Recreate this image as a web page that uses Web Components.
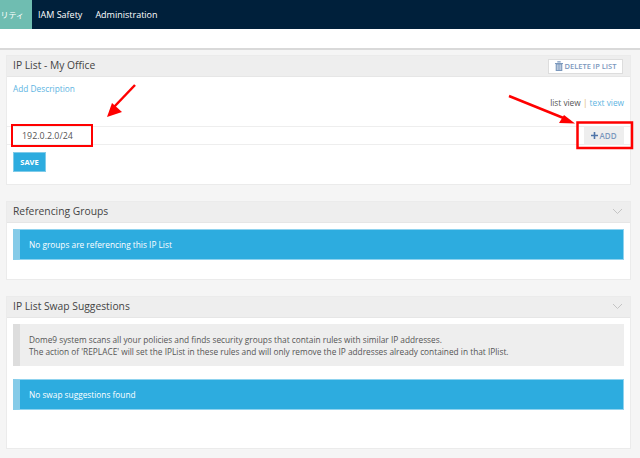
<!DOCTYPE html>
<html>
<head>
<meta charset="utf-8">
<style>
html, body { margin: 0; height: 458px; overflow: hidden; }
body { background: #f5f5f5; font-family: "Open Sans", "Noto Sans CJK JP", sans-serif; color: #444; }
.marks { position: absolute; left: 0; top: 0; }
</style>
</head>
<body>
<top-nav></top-nav>
<page-body>
  <list-panel heading="IP List - My Office" height="130" delete>
    <list-editor></list-editor>
  </list-panel>
  <list-panel heading="Referencing Groups" height="79" chevron>
    <note-box>No groups are referencing this IP List</note-box>
  </list-panel>
  <list-panel heading="IP List Swap Suggestions" height="153" chevron>
    <note-box kind="grey">Dome9 system scans all your policies and finds security groups that contain rules with similar IP addresses.<br>The action of 'REPLACE' will set the IPList in these rules and will only remove the IP addresses already contained in that IPlist.</note-box>
    <note-box style="margin-top:13px">No swap suggestions found</note-box>
  </list-panel>
</page-body>

<!-- red marks drawn on top of the screenshot -->
<svg class="marks" width="640" height="458" fill="none">
  <rect x="12" y="125" width="80" height="21" stroke="#f00" stroke-width="2"/>
  <rect x="577.500" y="122.500" width="54.500" height="25.500" stroke="#f00" stroke-width="2.500"/>
  <path d="M135 85L114 107" stroke="#f00" stroke-width="2.500"/>
  <path d="M107 117L112 103L122 112Z" fill="#f00"/>
  <path d="M509 96L566 119" stroke="#f00" stroke-width="2.500"/>
  <path d="M575 123.500L559 123L564 115Z" fill="#f00"/>
</svg>

<script>
class TopNav extends HTMLElement {
  constructor() {
    super();
    this.attachShadow({ mode: 'open' }).innerHTML = `
    <style>
    :host { display: block; }
    .bar { height: 29px; background: #00203b; display: flex; align-items: center; font-size: 9px; color: #fff; }
    .tab { width: 32px; height: 29px; background: #6fbdb1; display: flex; align-items: center; justify-content: flex-end; padding-right: 8px; box-sizing: border-box; white-space: nowrap; font-size: 8px; }
    .item { margin-left: 6px; }
    .item + .item { margin-left: 13px; }
    .strip { height: 19px; background: #fff; border-bottom: 2px solid #d9d9d9; }
    </style>
    <div class="bar">
      <div class="tab">リティ</div>
      <span class="item">IAM Safety</span>
      <span class="item">Administration</span>
    </div>
    <div class="strip"></div>`;
  }
}

class PageBody extends HTMLElement {
  constructor() {
    super();
    this.attachShadow({ mode: 'open' }).innerHTML = `
    <style>
    :host { display: flex; flex-direction: column; gap: 16px; padding: 5px 9px 0 6px; }
    </style>
    <slot></slot>`;
  }
}

class ListPanel extends HTMLElement {
  constructor() {
    super();
    const heading = this.getAttribute('heading');
    const height = this.getAttribute('height');
    const chevron = this.hasAttribute('chevron') ? `<svg width="11" height="7" viewBox="0 0 11 7" fill="none" style="margin-bottom:2px"><path d="M1 1l4.500 4.500L10 1" stroke="#c4c4c4"/></svg>` : '';
    const del = this.hasAttribute('delete') ? `<button><svg width="8" height="10" viewBox="0 0 8 10"><path d="M0 2h8v.9H7.300V10H.7V2.900H0zM2.300 1.500V.3h3.400v1.200z" fill="#7b98bd"/><path d="M2.300 3.500v5.500M4 3.500v5.500M5.700 3.500v5.500" stroke="#fff" stroke-width=".6"/></svg>DELETE IP LIST</button>` : '';
    this.attachShadow({ mode: 'open' }).innerHTML = `
    <style>
    :host { display: block; height: ${height}px; box-sizing: border-box; border: 1px solid #ebebeb; background: #fff; }
    .head { height: 20px; background: #eee; border-bottom: 1px solid #e6e6e6; display: flex; align-items: center; justify-content: space-between; padding: 0 7px 0 6px; }
    h3 { margin: 0 0 2px; font-size: 10.300px; font-weight: 400; color: #444; }
    button { display: flex; align-items: center; gap: 2px; height: 15px; width: 75px; justify-content: center; border: 1px solid #ddd; background: #fff; color: #7b98bd; font: 600 7.500px "Open Sans", sans-serif; padding: 0; }
    .body { padding: 6px 6px 0; }
    </style>
    <div class="head"><h3>${heading}</h3>${del}${chevron}</div>
    <div class="body"><slot></slot></div>`;
  }
}

class ListEditor extends HTMLElement {
  constructor() {
    super();
    this.attachShadow({ mode: 'open' }).innerHTML = `
    <style>
    :host { display: block; font-size: 8.300px; margin: 0 -6px; }
    .top { display: flex; justify-content: space-between; padding: 0 6px; height: 43px; box-sizing: border-box; }
    a { color: #5db4e2; }
    .desc { line-height: 12px; }
    .views { align-self: flex-end; padding-bottom: 18px; color: #555; line-height: 11px; }
    .views i { font-style: normal; color: #e0b46a; }
    .row { display: flex; justify-content: space-between; align-items: center; height: 19px; box-sizing: border-box; border-top: 1px solid #eee; border-bottom: 1px solid #eee; padding: 0 6px 0 15px; font-size: 8.900px; color: #555; }
    .add { width: 40px; height: 19px; background: #eee; color: #7b98bd; font-weight: 600; font-size: 8px; display: flex; align-items: center; justify-content: center; gap: 1px; }
    .add svg { display: block; }
    .save { margin: 7px 0 0 6px; width: 33px; height: 20px; background: #2dacdf; color: #fff; border: 1px solid #7fcbe9; box-sizing: border-box; font: 700 7.500px "Open Sans", sans-serif; padding: 0; display: block; }
    </style>
    <div class="top">
      <a class="desc">Add Description</a>
      <span class="views">list view <i>|</i> <a>text view</a></span>
    </div>
    <div class="row">
      <span>192.0.2.0/24</span>
      <span class="add"><svg width="7" height="7" viewBox="0 0 7 7"><path d="M2.700 0h1.600v2.700H7v1.600H4.300V7H2.700V4.300H0V2.700h2.700z" fill="#4f74a8"/></svg>ADD</span>
    </div>
    <button class="save">SAVE</button>`;
  }
}

class NoteBox extends HTMLElement {
  constructor() {
    super();
    this.attachShadow({ mode: 'open' }).innerHTML = `
    <style>
    :host { display: block; box-sizing: border-box; font-size: 8.300px; color: #fff; background: #2dacdf; border: 1px solid #8fd3ef; border-left: 7px solid #85cbe8; padding: 0 9px; height: 31px; line-height: 29px; }
    :host([kind="grey"]) { background: #eee; color: #555; border: 0; border-left: 7px solid #ddd; height: 42px; line-height: 11.700px; padding: 10px 9px 0; }
    </style>
    <slot></slot>`;
  }
}

customElements.define('top-nav', TopNav);
customElements.define('page-body', PageBody);
customElements.define('list-panel', ListPanel);
customElements.define('list-editor', ListEditor);
customElements.define('note-box', NoteBox);
</script>
</body>
</html>
